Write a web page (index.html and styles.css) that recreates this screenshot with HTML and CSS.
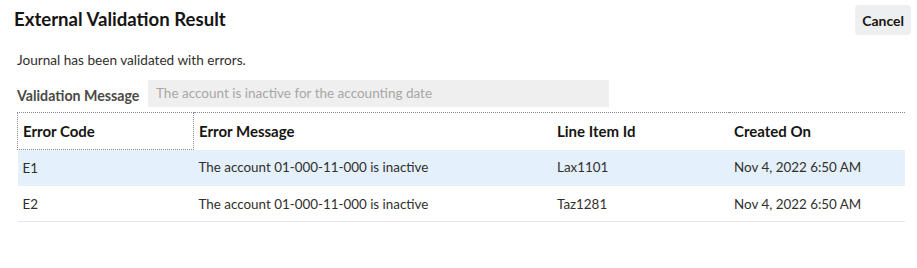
FILE: index.html
```html
<!DOCTYPE html>
<html lang="en">
<head>
    <meta charset="UTF-8">
    <meta name="viewport" content="width=device-width, initial-scale=1.0">
    <title>External Validation Result</title>
    <link rel="stylesheet" href="styles.css">
</head>
<body>
    <div class="dialog">
        <!-- Dialog header -->
        <div class="header">
            <h1>External Validation Result</h1>
            <button type="button" class="cancel">Cancel</button>
        </div>

        <p class="intro">Journal has been validated with errors.</p>

        <div class="field">
            <label for="message">Validation Message</label>
            <div class="readonly" id="message">The account is inactive for the accounting date</div>
        </div>

        <table class="results">
            <thead>
                <tr>
                    <th class="focused">Error Code</th>
                    <th>Error Message</th>
                    <th>Line Item Id</th>
                    <th>Created On</th>
                </tr>
            </thead>
            <tbody>
                <tr class="selected">
                    <td>E1</td>
                    <td>The account 01-000-11-000 is inactive</td>
                    <td>Lax1101</td>
                    <td>Nov 4, 2022 6:50 AM</td>
                </tr>
                <tr>
                    <td>E2</td>
                    <td>The account 01-000-11-000 is inactive</td>
                    <td>Taz1281</td>
                    <td>Nov 4, 2022 6:50 AM</td>
                </tr>
            </tbody>
        </table>
    </div>
</body>
</html>
```

FILE: styles.css
```css
/* General body styling */
body {
    font-family: Lato, "Noto Sans", sans-serif;
    background-color: #ffffff;
    color: #161513;
    margin: 0;
    padding: 0;
}

.dialog {
    width: 917px;
}

/* Header with title and cancel button */
.header {
    display: flex;
    justify-content: space-between;
    align-items: flex-start;
    padding: 5px 6px 0 14px;
}

h1 {
    font-size: 18.6px;
    font-weight: bold;
    margin: 3px 0 0 0;
    line-height: 22px;
}

.cancel {
    font-family: inherit;
    font-size: 14px;
    font-weight: bold;
    color: #161513;
    background-color: #eeeff0;
    border: none;
    border-radius: 4px;
    height: 30px;
    padding: 0 7px;
}

.intro {
    font-size: 13.6px;
    color: #312f2c;
    margin: 16px 0 0 17px;
    line-height: 18px;
}

/* Read-only validation message */
.field {
    display: flex;
    align-items: center;
    margin: 11px 0 0 17px;
}

.field label {
    font-size: 14.2px;
    font-weight: bold;
    color: #4b4a48;
    width: 131px;
    padding-top: 3px;
}

.readonly {
    width: 453px;
    height: 27px;
    line-height: 27px;
    padding-left: 8px;
    background-color: #efefef;
    color: #a8a7a5;
    font-size: 13.5px;
}

/* Results table */
.results {
    border-collapse: collapse;
    margin: 5px 0 0 17px;
    width: 888px;
    font-size: 13.4px;
}

.results th {
    text-align: left;
    font-weight: bold;
    font-size: 15px;
    height: 36px;
    padding: 0 5px;
    border-top: 1px dotted #8e8c8a;
}

.results th.focused {
    border: 1px dotted #8e8c8a;
}

.results th:nth-child(1) { width: 165px; }
.results th:nth-child(2) { width: 348px; }
.results th:nth-child(3) { width: 167px; }

.results td {
    height: 35px;
    padding: 0 5px;
    color: #312f2c;
    border-bottom: 1px solid #e6e6e6;
}

.results tr.selected td {
    background-color: #e4f0fc;
    border-bottom-color: #e4f0fc;
}
```
